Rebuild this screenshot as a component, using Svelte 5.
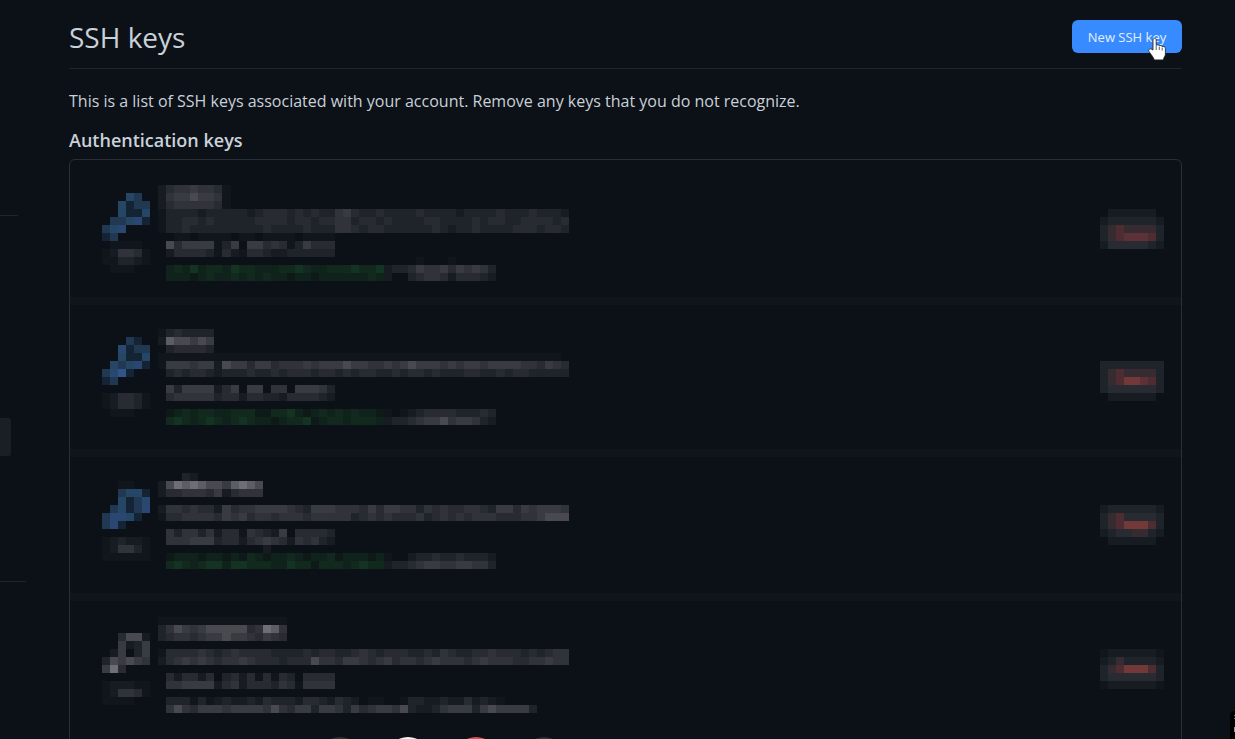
<script>
  // One character per mosaic cell: digits are greys, a-d greens, p-t blues, u-x reds.
  const palette = {
    1: '#11151c', 2: '#171b22', 3: '#1f232a', 4: '#282b32', 5: '#303339',
    6: '#393b42', 7: '#484a50', 8: '#5c5e64', 9: '#6e6f74',
    a: '#0d1a18', b: '#10221c', c: '#122a1e', d: '#143322',
    p: '#152434', q: '#203852', r: '#264666', s: '#294770', t: '#31548a',
    u: '#352b30', v: '#4d2d32', w: '#5d3138', x: '#733838'
  };

  const keys = [
    {
      rows: 12,
      icon: [
        '', '...rq.', '..rpqq', '..rppr', '.qqrsp', 'qrs...', 'pq....', '.1111.',
        '125541', '113321', '.111..'
      ],
      body: [
        '245565541',
        '256676651',
        '245555541',
        '133332333332344434343356433433334333323333433343332',
        '133443433333444434434455344343333443333434433444434',
        '133433333333343333433355434433333343233433334443443',
        '..11.1111.11.1111.1111',
        '.746666136.66454136444',
        '.244443142144322333333',
        '................................1...1',
        '.bcbdbccbdccbbbccdcbbcccdccd23346556465653',
        '.bbbabcbbcbcbcbbabbabbbbbbcb2..34554244432'
      ],
      action: ['', '', '', '.222222.', '23333332', '3uvuuuu3', '3uvwwwv3', '24444432']
    },
    {
      rows: 14,
      icon: [
        '', '', '...qp.', '..spqq', '..rppr', '.rqrsp', 'qstp..', 'pq....', '......',
        '124431', '124431', '.111..'
      ],
      body: [
        '',
        '1343333',
        '2877676',
        '.344443',
        '11111111111111111111111111111111111111111111111111',
        '166656627664664555656667665565676665656656666554654',
        '.34344323334334344434434344334344343334433434433333',
        '',
        '.636666246.66.55.66653',
        '.455555344244332444432',
        '',
        '.abcbccbbcccaaccdbabcbcbcbba1.123444433343',
        '.cdcbcdcbcdcbbabccdabccbcccb23345667566532'
      ],
      action: ['', '', '', '', '', '33333333', '3uvuuuu3', '3uvxxwv3', '34444443', '.222222.']
    },
    {
      rows: 13,
      icon: [
        '', '..11..', '..qrrp', '..rpqs', '.qrpqs', 'qssrp.', 'qsp...', '', '123221',
        '125531', '111111'
      ],
      body: [
        '...32',
        '2798987768987',
        '2445554624555',
        '',
        '255454426455666654366655546466553545445543664656665',
        '144555546564554555455555345454445345454555444556777',
        '',
        '.535535244154326.44443',
        '.555666344245654254532',
        '.............2',
        '.abbbabbabacbabbcbabbcabbbab1..23343343332',
        '.cdcbcddbddcccbbdccacccbcdcc23345665566553'
      ],
      action: ['', '', '', '', '23333332', '3uv44443', '3uvxxxv3', '2344uu32', '.222222.']
    },
    {
      rows: 14,
      icon: [
        '', '', '..4772', '..6236', '.26.36', '376765', '694...', '', '122211', '125541',
        '1111..'
      ],
      body: [
        '1111111111111111',
        '3576567777745985',
        '3455456676654654',
        '',
        '144445434544443333434433454344433435433445444343455',
        '245656545565444344475546654564554565554565554455655',
        '',
        '.424424.342414143.4444',
        '.556666245244435415555',
        '',
        '.333131232232433324432432.11..1332232242321',
        '.5754666566665754663665364566573223566636766663'
      ],
      action: ['', '', '', '', '12222221', '23u33332', '3uvxxxv3', '34444443', '12222221']
    }
  ];
</script>

{#snippet mosaic(name, cols, rows, cells)}
  <svg class="mosaic {name}" viewBox="0 0 {cols} {rows}" preserveAspectRatio="none" style:height="{rows * 8}px" aria-hidden="true">
    {#each cells as line, y}
      {#each line as c, x}
        {#if palette[c]}<rect {x} {y} width="1" height="1" fill={palette[c]} />{/if}
      {/each}
    {/each}
  </svg>
{/snippet}

<div class="page">
  <aside class="side">
    <hr class="short" />
    <div class="selected"></div>
    <hr class="long" />
  </aside>

  <main>
    <header>
      <h1>SSH keys</h1>
      <button class="new" type="button">
        New SSH key
        <svg class="cursor" viewBox="0 0 18 24" aria-hidden="true">
          <path d="M5 13V3.2C5 .7 8.200.7 8.200 3.200V8.400c.7-1 2.700-.8 3.100.4 1-.8 2.600-.3 2.900.9 1.300-.6 3.200 0 3.200 1.800v5.400c0 2.600-1.900 3.500-2.100 6H6.200C6 20.800 3.300 18 .9 14.400c-1-1.700 1.300-3.500 2.900-2z" fill="#fff" stroke="#1a1a1a" stroke-width=".8" stroke-linejoin="round" />
          <path d="M8.200 9v4M11.300 9.800V13M14.200 10.700V13.500" fill="none" stroke="#333" stroke-width=".8" />
        </svg>
      </button>
    </header>
    <p>This is a list of SSH keys associated with your account. Remove any keys that you do not recognize.</p>
    <h2>Authentication keys</h2>
    <ul>
      {#each keys as key}
        <li>
          {@render mosaic('icon', 6, key.rows, key.icon)}
          {@render mosaic('body', 51, key.rows, key.body)}
          <button class="remove" type="button" aria-label="Delete key">
            {@render mosaic('action', 8, key.rows, key.action)}
          </button>
        </li>
      {/each}
    </ul>
  </main>

  <div class="dock" aria-hidden="true">
    <i></i><i class="white"></i><i class="red"></i><i></i>
  </div>
  <div class="tab" aria-hidden="true"></div>
</div>

<style>
  :global(body) {
    background: #0c1017;
  }
  .page {
    position: relative;
    display: flex;
    height: 100vh;
    overflow: hidden;
    background: #0c1017;
    color: #c9d1d9;
    font-family: 'Open Sans', 'Noto Sans', sans-serif;
  }
  .side {
    flex: 0 0 69px;
    padding-top: 215px;
  }
  hr {
    height: 1px;
    margin: 0;
    border: 0;
    background: #20252c;
  }
  .short {
    width: 18px;
  }
  .long {
    width: 26px;
  }
  .selected {
    width: 11px;
    height: 38px;
    margin: 202px 0 125px;
    border-radius: 0 2px 2px 0;
    background: #1a1e25;
  }
  main {
    flex: 1;
    min-width: 0;
    padding: 16px 53px 0 0;
  }
  header {
    display: flex;
    align-items: flex-start;
    justify-content: space-between;
    height: 52px;
    border-bottom: 1px solid #20242c;
  }
  h1 {
    margin: 0;
    font-size: 28px;
    font-weight: 400;
    line-height: 42px;
  }
  .new {
    position: relative;
    width: 110px;
    height: 33px;
    margin-top: 4px;
    padding: 1px 0 0;
    border: 0;
    border-radius: 6px;
    background: #388bff;
    color: #e3efff;
    font: 13px/32px 'Open Sans', 'Noto Sans', sans-serif;
  }
  .cursor {
    position: absolute;
    top: 17px;
    left: 76px;
    width: 18px;
    height: 24px;
  }
  p {
    margin: 20px 0 0;
    font-size: 16px;
    line-height: 24px;
    white-space: nowrap;
  }
  h2 {
    margin: 15px 0 7px;
    font-size: 18px;
    font-weight: 600;
    line-height: 24px;
  }
  ul {
    margin: 0;
    padding: 1px 0 0;
    border: 1px solid #2a2f36;
    border-radius: 6px;
    list-style: none;
  }
  li {
    display: flex;
    align-items: flex-start;
    padding: 16px 17px 16px 32px;
    border-top: 8px solid #10141b;
  }
  li:first-child {
    border-top-color: transparent;
  }
  .mosaic {
    display: block;
    flex: none;
    shape-rendering: crispEdges;
  }
  .icon {
    width: 48px;
  }
  .body {
    width: 411px;
    margin-left: 8px;
  }
  .action {
    width: 64px;
  }
  .remove {
    margin-left: auto;
    padding: 0;
    border: 0;
    background: none;
  }
  .dock {
    position: absolute;
    top: calc(100% - 2px);
    left: 319px;
    display: flex;
    gap: 26px;
  }
  .dock i {
    width: 42px;
    height: 42px;
    border-radius: 50%;
    background: #303136;
  }
  .dock .white {
    background: #f4f4f4;
  }
  .dock .red {
    background: #e05252;
  }
  .tab {
    position: absolute;
    right: 0;
    bottom: 0;
    width: 5px;
    height: 28px;
    border-radius: 5px 0 0;
    background:
      linear-gradient(#777, #777) 4px 4px / 1px 1px no-repeat,
      linear-gradient(#777, #777) 4px 7px / 1px 1px no-repeat,
      linear-gradient(#999, #999) 4px 16px / 1px 5px no-repeat,
      #000;
  }
</style>
